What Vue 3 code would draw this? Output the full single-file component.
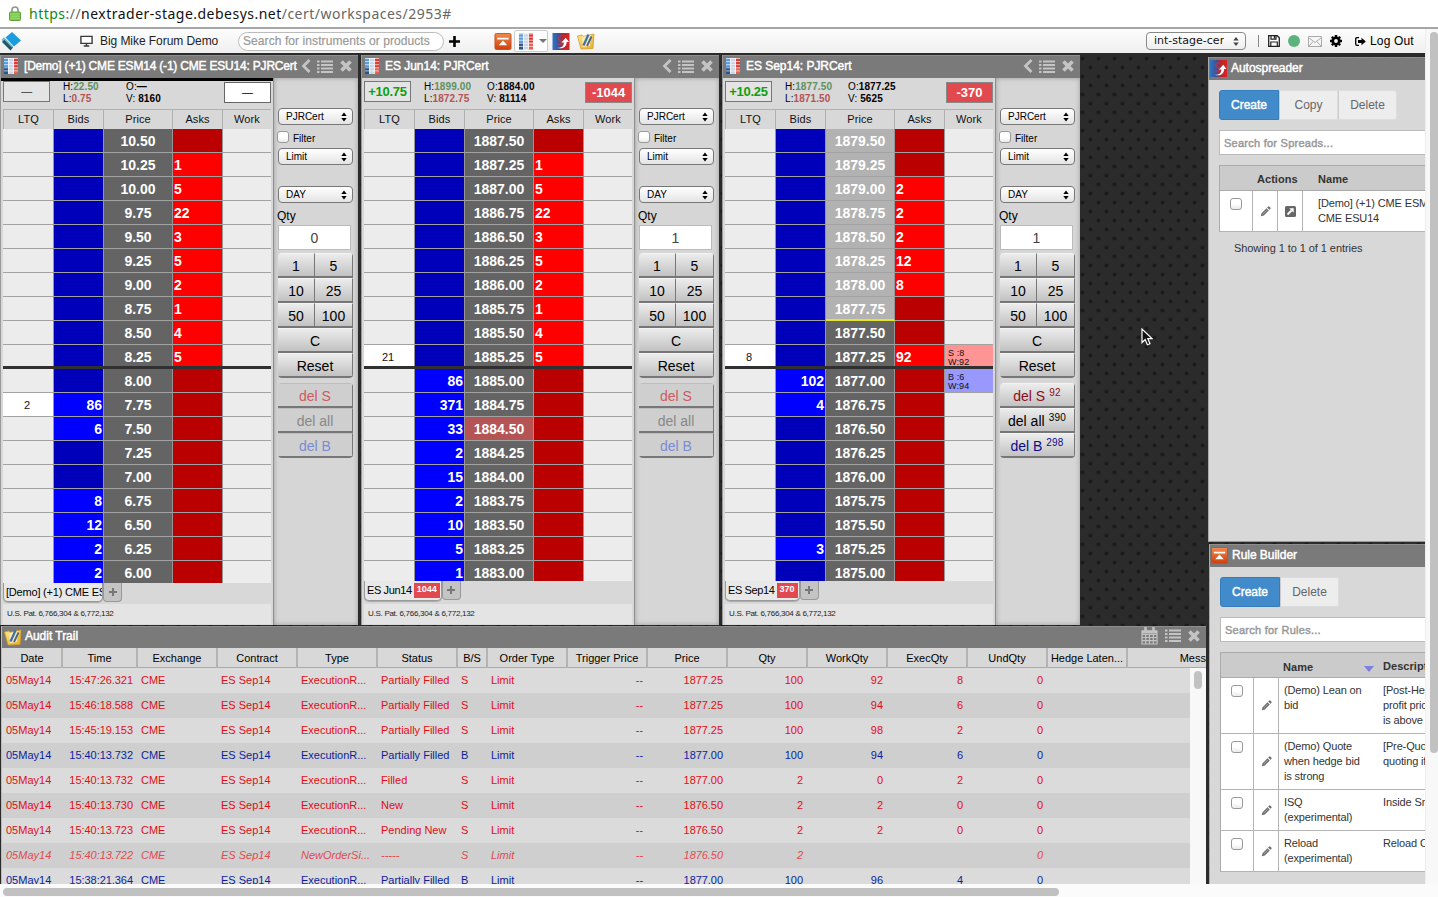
<script setup>
const askSet = ['', '1', '5', '22', '3', '5', '2', '1', '4', '5']

function buildRows(start, bids, asks, extra = {}) {
  return Array.from({ length: 19 }, (_, i) => ({
    price: (start - i * 0.25).toFixed(2),
    bid: bids[i] || '',
    ask: asks[i] || '',
    ...(extra[i] || {}),
  }))
}

const empty10 = Array(10).fill('')

const ladders = [
  {
    id: 'a', title: '[Demo] (+1) CME ESM14 (-1) CME ESU14: PJRCert', change: '—', up: false,
    high: '22.50', low: '0.75', open: '—', volume: '8160', position: '—', loss: false,
    qty: '0', tab: '[Demo] (+1) CME ESM14', badge: '', offset: true, active: false,
    rows: buildRows(10.5, [...empty10, '', '86', '6', '', '', '8', '12', '2', '2'], askSet, { 11: { ltq: '2' } }),
    dels: ['', '', ''],
  },
  {
    id: 'b', title: 'ES Jun14: PJRCert', change: '+10.75', up: true,
    high: '1899.00', low: '1872.75', open: '1884.00', volume: '81114', position: '-1044', loss: true,
    qty: '1', tab: 'ES Jun14', badge: '1044', offset: false, active: false,
    rows: buildRows(1887.5, [...empty10, '86', '371', '33', '2', '15', '2', '10', '5', '1'], askSet, { 9: { ltq: '21' }, 12: { tone: 'last' } }),
    dels: ['', '', ''],
  },
  {
    id: 'c', title: 'ES Sep14: PJRCert', change: '+10.25', up: true,
    high: '1877.50', low: '1871.50', open: '1877.25', volume: '5625', position: '-370', loss: true,
    qty: '1', tab: 'ES Sep14', badge: '370', offset: false, active: true,
    rows: buildRows(1879.5, [...empty10, '102', '4', '', '', '', '', '', '3', ''],
      ['', '', '2', '2', '2', '12', '8', '', '', '92'],
      {
        0: { tone: 'out' }, 1: { tone: 'out' }, 2: { tone: 'out' }, 3: { tone: 'out' },
        4: { tone: 'out' }, 5: { tone: 'out' }, 6: { tone: 'out' }, 7: { tone: 'out edge' },
        9: { ltq: '8', work: ['S :8', 'W:92'], side: 'sell' },
        10: { work: ['B :6', 'W:94'], side: 'buy' },
      }),
    dels: ['92', '390', '298'],
  },
]

const columns = ['Date', 'Time', 'Exchange', 'Contract', 'Type', 'Status', 'B/S', 'Order Type', 'Trigger Price', 'Price', 'Qty', 'WorkQty', 'ExecQty', 'UndQty', 'Hedge Laten...', 'Message']
const rightCols = [1, 8, 9, 10, 11, 12, 13]

const audit = [
  ['15:47:26.321', 'ExecutionR...', 'Partially Filled', 'S', '1877.25', '100', '92', '8'],
  ['15:46:18.588', 'ExecutionR...', 'Partially Filled', 'S', '1877.25', '100', '94', '6'],
  ['15:45:19.153', 'ExecutionR...', 'Partially Filled', 'S', '1877.25', '100', '98', '2'],
  ['15:40:13.732', 'ExecutionR...', 'Partially Filled', 'B', '1877.00', '100', '94', '6'],
  ['15:40:13.732', 'ExecutionR...', 'Filled', 'S', '1877.00', '2', '0', '2'],
  ['15:40:13.730', 'ExecutionR...', 'New', 'S', '1876.50', '2', '2', '0'],
  ['15:40:13.723', 'ExecutionR...', 'Pending New', 'S', '1876.50', '2', '2', '0'],
  ['15:40:13.722', 'NewOrderSi...', '-----', 'S', '1876.50', '2', '', ''],
  ['15:38:21.364', 'ExecutionR...', 'Partially Filled', 'B', '1877.00', '100', '96', '4'],
].map(([time, type, status, side, price, qty, work, exec]) => ({
  side,
  pending: status === '-----',
  cells: ['05May14', time, 'CME', 'ES Sep14', type, status, side, 'Limit', '--', price, qty, work, exec, '0', '', ''],
}))

const rules = [
  { h: 56, name: ['(Demo) Lean on', 'bid'], desc: ['[Post-Hedge]', 'profit price', 'is above'] },
  { h: 56, name: ['(Demo) Quote', 'when hedge bid', 'is strong'], desc: ['[Pre-Quote]', 'quoting if'] },
  { h: 41, name: ['ISQ', '(experimental)'], desc: ['Inside Smart'] },
  { h: 41, name: ['Reload', '(experimental)'], desc: ['Reload Order'] },
]
</script>

<template>
  <div class="page">
    <svg class="defs" aria-hidden="true">
      <defs>
        <linearGradient id="gOrange" x1="0" y1="0" x2="0" y2="1"><stop offset="0" stop-color="#f08a50" /><stop offset="1" stop-color="#cf3f0c" /></linearGradient>
        <linearGradient id="gSpread" x1="0" y1="0" x2="1" y2="0"><stop offset="0" stop-color="#2f76c0" /><stop offset=".4" stop-color="#3a4f96" /><stop offset=".6" stop-color="#b8272d" /><stop offset="1" stop-color="#dc2222" /></linearGradient>
        <linearGradient id="gFolder" x1="0" y1="0" x2="1" y2="1"><stop offset="0" stop-color="#fbe78b" /><stop offset="1" stop-color="#e3ae2c" /></linearGradient>
      </defs>
      <symbol id="i-ladder" viewBox="0 0 14 16">
        <rect width="14" height="16" fill="#c9d6e6" />
        <rect width="4.500" height="9" fill="#5b9bdc" /><rect y="9" width="4.500" height="7" fill="#27558f" />
        <rect x="9.500" width="4.500" height="9" fill="#dc3a35" /><rect x="9.500" y="9" width="4.500" height="7" fill="#e8604c" />
        <path d="M0 .5h14M0 3.600h14M0 6.700h14M0 9.800h14M0 12.900h14" stroke="#fff" stroke-width="1" opacity=".65" />
        <path d="M4.500 0v16M9.500 0v16" stroke="#fff" stroke-width=".8" />
      </symbol>
      <symbol id="i-rule" viewBox="0 0 18 18">
        <rect x=".5" y=".5" width="17" height="17" rx="1.500" fill="url(#gOrange)" stroke="#c9521f" />
        <path d="M3 5h12v2H3zM9 8l4.500 5h-9z" fill="#fff" />
      </symbol>
      <symbol id="i-spread" viewBox="0 0 18 18">
        <rect width="18" height="18" fill="url(#gSpread)" />
        <path d="M10 3C6 3 5 6 8 8s2 5-3 4" fill="none" stroke="#b23a55" stroke-width="2" opacity=".8" />
        <path d="M5 15.500c5 .5 7-2 7-5.500H9.500L14 5l3.500 4.500H15c0 5-4 8-10 6z" fill="#fff" />
      </symbol>
      <symbol id="i-audit" viewBox="0 0 18 18">
        <path d="M.5 4L5 3l1 1.500L17 2l-1 14.500-12 .5z" fill="url(#gFolder)" stroke="#d79b22" stroke-width=".8" />
        <path d="M5 5l9-2-1 11-7 1z" fill="#fdf3bd" opacity=".8" />
        <path d="M6.500 13.500L11.500 2.500" stroke="#3a6fb4" stroke-width="2.200" /><path d="M10 14l4.500-9.500" stroke="#46648f" stroke-width="1.800" />
      </symbol>
      <symbol id="i-chev" viewBox="0 0 10 14"><path d="M8.500 1L2.500 7l6 6" fill="none" stroke="currentColor" stroke-width="2.800" /></symbol>
      <symbol id="i-list" viewBox="0 0 16 13"><path d="M0 1.500h2.500M0 5h2.500M0 8.500h2.500M0 12h2.500M4 1.500h12M4 5h12M4 8.500h12M4 12h12" stroke="currentColor" stroke-width="2" /></symbol>
      <symbol id="i-x" viewBox="0 0 12 12"><path d="M1.500 1.500l9 9M10.500 1.500l-9 9" stroke="currentColor" stroke-width="3.700" /></symbol>
      <symbol id="i-pencil" viewBox="0 0 12 12"><path d="M.8 11.200l.9-3.400 5.400-5.400 2.500 2.500-5.400 5.400zM7.800 1.700L9 .6q.5-.4 1 0l1.400 1.400q.5.500 0 1L10.300 4.200z" fill="#6c6c6c" /><path d="M3 8.900l4.800-4.800" stroke="#ccc" stroke-width=".7" /></symbol>
      <symbol id="i-updown" viewBox="0 0 6 9"><path d="M3 0l2.700 3.600H.3zM3 9l2.700-3.600H.3z" fill="currentColor" /></symbol>
    </svg>

    <header class="url">
      <svg class="lock" viewBox="0 0 12 15"><path d="M3 7V4a3 3 0 016 0v3" fill="none" stroke="#8b9a83" stroke-width="1.600" /><rect x=".5" y="6" width="11" height="8.500" rx="1" fill="#7cc84e" stroke="#5fa43b" /><path d="M1.500 8h9M1.500 10.200h9M1.500 12.400h9" stroke="#a4e07d" stroke-width=".8" /></svg>
      <p class="address"><span class="secure">https</span><span class="dim">://</span>nextrader-stage.debesys.net<span class="dim">/cert/workspaces/2953#</span></p>
    </header>

    <div class="viewport">
      <div class="clip">
        <nav class="toolbar">
          <svg class="logo" viewBox="0 0 20 20"><path d="M11 1l9 8.500-7 6L4.500 6.500z" fill="#1b9ce0" /><path d="M3.500 8L12 16.500 9.500 19.500 1 11z" fill="#285468" /><path d="M1 9.500l2-2 8.500 8.500" fill="none" stroke="#6fb9c8" stroke-width="1.600" /></svg>
          <svg class="monitor" viewBox="0 0 14 12"><path d="M1 1h12v7.500H1z" fill="#fff" stroke="#3a3a3a" stroke-width="1.500" /><path d="M4 11.300h6M7 8.500v3" stroke="#3a3a3a" stroke-width="1.600" /></svg>
          <span class="workspace">Big Mike Forum Demo</span>
          <div class="find">Search for instruments or products</div>
          <svg class="plus" viewBox="0 0 11 11"><path d="M5.500 0v11M0 5.500h11" stroke="#000" stroke-width="2.600" /></svg>
          <svg class="tb-rule"><use href="#i-rule" /></svg>
          <div class="split"><svg class="tb-ladder"><use href="#i-ladder" /></svg><i class="caret"></i></div>
          <svg class="tb-spread"><use href="#i-spread" /></svg>
          <svg class="tb-audit"><use href="#i-audit" /></svg>
          <div class="tools">
            <div class="env"><span>int-stage-cert</span><svg><use href="#i-updown" /></svg></div>
            <i class="bar"></i>
            <svg class="save" viewBox="0 0 12 12"><path d="M.7.700h8.600l2 2v8.600H.7z" fill="#fff" stroke="#222" stroke-width="1.300" /><path d="M3 .7v3.500h5V.7M2.800 11.300V7h6.500v4.300" fill="none" stroke="#222" stroke-width="1.200" /><path d="M6.500 1v2.500" stroke="#222" stroke-width="1.400" /></svg>
            <i class="status"></i>
            <svg class="mail" viewBox="0 0 14 11"><path d="M.5.500h13v10H.5zM.5 1.500L7 6.500l6.500-5M.5 10.500l4.700-5M13.500 10.500l-4.700-5" fill="none" stroke="#aaa" /></svg>
            <svg class="gear" viewBox="0 0 12 12"><circle cx="6" cy="6" r="3.200" fill="none" stroke="#000" stroke-width="2.600" /><path d="M6 0v2M6 10v2M0 6h2M10 6h2M1.800 1.800l1.400 1.400M8.800 8.800l1.400 1.400M10.200 1.800L8.800 3.200M3.200 8.800l-1.400 1.400" stroke="#000" stroke-width="2.400" /></svg>
            <svg class="exit" viewBox="0 0 11 9"><path d="M4 .700H2Q.7.700.7 2v5q0 1.300 1.300 1.300h2" fill="none" stroke="#000" stroke-width="1.300" /><path d="M6.500.800L10.800 4.500 6.500 8.200V6H3V3h3.500z" fill="#000" /></svg>
            <span class="logout">Log Out</span>
          </div>
        </nav>

        <main class="desktop">
          <section v-for="w in ladders" :key="w.id" class="win ladder" :class="'at-' + w.id">
            <div class="title">
              <svg class="t-ladder"><use href="#i-ladder" /></svg>
              <h2 :class="{ tight: w.offset }">{{ w.title }}</h2>
              <div class="ctl"><svg class="c-chev"><use href="#i-chev" /></svg><svg class="c-list"><use href="#i-list" /></svg><svg class="c-x"><use href="#i-x" /></svg></div>
            </div>
            <div class="split-body">
              <div class="main" :class="{ ruled: w.offset }">
                <div class="info">
                  <div class="chg" :class="{ up: w.up }">{{ w.change }}</div>
                  <div class="hl"><p>H:<b class="g">{{ w.high }}</b></p><p>L:<b class="r">{{ w.low }}</b></p></div>
                  <div class="ov"><p>O:<b>{{ w.open }}</b></p><p>V: <b>{{ w.volume }}</b></p></div>
                  <div class="pos" :class="{ loss: w.loss }">{{ w.position }}</div>
                </div>
                <div class="grid head"><span>LTQ</span><span>Bids</span><span>Price</span><span>Asks</span><span>Work</span></div>
                <div class="rows" :class="{ tall: w.offset }">
                  <div v-for="(r, i) in w.rows" :key="i" class="grid row" :class="{ inside: i === 9 }">
                    <span class="ltq" :class="{ hit: r.ltq }">{{ r.ltq }}</span>
                    <span class="bid" :class="{ hit: r.bid }">{{ r.bid }}</span>
                    <span class="price" :class="r.tone">{{ r.price }}</span>
                    <span class="ask" :class="{ hit: r.ask }">{{ r.ask }}</span>
                    <span class="work" :class="r.side"><em v-for="t in r.work" :key="t">{{ t }}</em></span>
                  </div>
                </div>
                <div class="tabs"><span class="tab" :class="{ wide: !w.badge }">{{ w.tab }}<b v-if="w.badge">{{ w.badge }}</b></span><span class="add"><svg viewBox="0 0 8 8"><path d="M4 0v8M0 4h8" stroke="#777" stroke-width="2" /></svg></span></div>
                <div class="pat">U.S. Pat. 6,766,304 &amp; 6,772,132</div>
              </div>
              <aside class="side">
                <div class="sel"><span>PJRCert</span><svg><use href="#i-updown" /></svg></div>
                <label class="filter"><i class="box"></i>Filter</label>
                <div class="sel s2"><span>Limit</span><svg><use href="#i-updown" /></svg></div>
                <div class="sel s3"><span>DAY</span><svg><use href="#i-updown" /></svg></div>
                <p class="qlabel">Qty</p>
                <div class="qty">{{ w.qty }}</div>
                <div class="keys"><i v-for="k in ['1', '5', '10', '25', '50', '100']" :key="k">{{ k }}</i><i class="full">C</i><i class="full">Reset</i></div>
                <div class="keys dels" :class="{ on: w.active }">
                  <i class="full ds">del S<sup v-if="w.dels[0]">{{ w.dels[0] }}</sup></i>
                  <i class="full da">del all<sup v-if="w.dels[1]">{{ w.dels[1] }}</sup></i>
                  <i class="full db">del B<sup v-if="w.dels[2]">{{ w.dels[2] }}</sup></i>
                </div>
              </aside>
            </div>
          </section>

          <section class="win audit">
            <div class="title">
              <svg class="t-audit"><use href="#i-audit" /></svg>
              <h2>Audit Trail</h2>
              <div class="ctl">
                <svg class="c-cal" viewBox="0 0 17 18"><path d="M1 4h15v13H1zM1 7.500h15M1 10.500h15M1 13.700h15M4.700 7v10M8.500 7v10M12.300 7v10" fill="none" stroke="currentColor" stroke-width="1.200" /><path d="M1 3.500h15v3H1z" fill="currentColor" /><path d="M4.500 0v5M12.500 0v5" stroke="currentColor" stroke-width="2.500" /></svg>
                <svg class="c-list"><use href="#i-list" /></svg><svg class="c-x"><use href="#i-x" /></svg>
              </div>
            </div>
            <div class="acols ahead"><span v-for="c in columns" :key="c">{{ c }}</span></div>
            <div class="abody">
              <div class="alist">
                <div v-for="(r, i) in audit" :key="i" class="acols arow" :class="[r.side, { pending: r.pending }]">
                  <span v-for="(c, j) in r.cells" :key="j" :class="{ num: rightCols.includes(j) }">{{ c }}</span>
                </div>
              </div>
              <div class="ascroll"><i></i></div>
            </div>
          </section>

          <section class="win spreader">
            <div class="title"><svg class="t-sq"><use href="#i-spread" /></svg><h2>Autospreader</h2></div>
            <div class="panel">
              <div class="btns"><span class="primary">Create</span><span>Copy</span><span>Delete</span></div>
              <div class="search">Search for Spreads...</div>
              <div class="tbl">
                <div class="th sp"><span></span><span class="act">Actions</span><span>Name</span></div>
                <div class="tr sp">
                  <span class="ck"><i class="box"></i></span>
                  <span class="ic"><svg><use href="#i-pencil" /></svg></span>
                  <span class="ic"><svg viewBox="0 0 11 11"><rect width="11" height="11" rx="1.500" fill="#666" /><path d="M2.500 8.500l4-4" stroke="#fff" stroke-width="1.800" /><path d="M4.300 2.300h4.400v4.400z" fill="#fff" /></svg></span>
                  <span class="nm">[Demo] (+1) CME ESM14 (-1)<br>CME ESU14</span>
                </div>
              </div>
              <p class="count">Showing 1 to 1 of 1 entries</p>
            </div>
          </section>

          <section class="win rules">
            <div class="title"><svg class="t-sq"><use href="#i-rule" /></svg><h2>Rule Builder</h2></div>
            <div class="panel">
              <div class="btns"><span class="primary">Create</span><span>Delete</span></div>
              <div class="search">Search for Rules...</div>
              <div class="tbl">
                <div class="th ru"><span></span><span></span><span class="sorted">Name<i></i></span><span class="dc">Description</span></div>
                <div v-for="r in rules" :key="r.name[0]" class="tr ru" :class="'h' + r.h">
                  <span class="ck"><i class="box"></i></span>
                  <span class="ic"><svg><use href="#i-pencil" /></svg></span>
                  <span class="nm"><em v-for="t in r.name" :key="t">{{ t }}</em></span>
                  <span class="dc"><em v-for="t in r.desc" :key="t">{{ t }}</em></span>
                </div>
              </div>
            </div>
          </section>

          <svg class="cursor" viewBox="0 0 12 18"><path d="M1 1v13.500l3.200-3 2.200 5.300 2.600-1.100-2.200-5.100H11z" fill="#111" stroke="#fff" stroke-width="1.200" /></svg>
        </main>
      </div>
      <div class="vscroll"><i></i></div>
    </div>
    <div class="hscroll"><i></i></div>
  </div>
</template>

<style>
html, body { overflow: hidden; background: #fff; }
</style>

<style scoped>
* { box-sizing: border-box; margin: 0; padding: 0; }
i, em { font-style: normal; }
svg { display: block; flex: none; }
.defs { position: absolute; width: 0; height: 0; }
.page { width: 1438px; height: 897px; display: flex; flex-direction: column; overflow: hidden; font: 11px/1 "Liberation Sans", Arial, sans-serif; color: #000; background: #fff; white-space: nowrap; }

.url { height: 29px; flex: none; display: flex; align-items: center; padding: 0 0 0 9px; border-bottom: 2px solid #a6a6a6; background: #fff; }
.lock { width: 12px; height: 15px; margin-right: 8px; }
.address { font: 14px/20px "Noto Sans", sans-serif; letter-spacing: .48px; color: #111; }
.secure { color: #128a12; }
.dim { color: #666; }

.viewport { height: 855px; flex: none; display: flex; }
.clip { width: 1425px; display: flex; flex-direction: column; overflow: hidden; }
.toolbar { height: 24px; flex: none; display: flex; align-items: center; background: linear-gradient(#fdfdfd, #efefef); }
.logo { width: 20px; height: 20px; margin-left: 1px; }
.monitor { width: 13px; height: 12px; margin-left: 59px; }
.workspace { width: 119px; margin-left: 7px; font-size: 12px; color: #222; letter-spacing: -.06px; }
.find { width: 206px; height: 19px; margin-left: 19px; padding-left: 4px; border: 1px solid #bbb; border-radius: 10px; background: #fff; font-size: 12px; line-height: 17px; color: #999; -webkit-text-stroke: .2px #999; letter-spacing: .08px; }
.plus { width: 11px; height: 11px; margin-left: 5px; }
.tb-rule { width: 18px; height: 17px; margin-left: 34px; }
.split { height: 22px; width: 34px; margin-left: 2px; display: flex; align-items: center; padding-left: 4px; gap: 6px; border: 1px solid #ccc; border-radius: 2px; background: #fff; }
.tb-ladder { width: 14px; height: 17px; }
.caret { border: 4px solid transparent; border-top-color: #777; border-bottom: 0; }
.tb-spread { width: 18px; height: 17px; margin-left: 4px; }
.tb-audit { width: 18px; height: 18px; margin-left: 7px; }
.tools { margin-left: auto; display: flex; align-items: center; padding-right: 11px; }
.env { width: 100px; height: 18px; display: flex; align-items: center; justify-content: space-between; padding: 0 6px 0 7px; border: 1px solid #888; border-radius: 4px; background: linear-gradient(#fff, #eee); }
.env span { width: 70px; overflow: hidden; font: 11px/16px "DejaVu Sans", sans-serif; color: #111; }
.env svg { width: 6px; height: 9px; color: #444; }
.bar { width: 1px; height: 12px; margin: 0 9px 0 12px; background: #888; }
.save { width: 12px; height: 12px; }
.status { width: 12px; height: 12px; margin: 0 8px 0 8px; border-radius: 50%; background: #5cb27c; }
.mail { width: 14px; height: 11px; }
.gear { width: 12px; height: 12px; margin: 0 13px 0 8px; }
.exit { width: 11px; height: 9px; margin-right: 4px; }
.logout { width: 44px; font-size: 12px; letter-spacing: .15px; }

.desktop { position: relative; flex: 1; overflow: hidden; background-color: #2b2b2b; background-image: radial-gradient(circle at 2.500px 14.500px, #1a1a1a 1.200px, transparent 2.600px), radial-gradient(circle at 10.500px 5.500px, #1a1a1a 1.200px, transparent 2.600px); background-size: 16px 18px; }
.win { position: absolute; display: flex; flex-direction: column; background: #d8d8d8; }
.at-a { left: 1px; }
.at-b { left: 362px; }
.at-c { left: 723px; }
.ladder { top: 2px; width: 357px; height: 570px; box-shadow: -1px 0 #999; }
.title { height: 23px; flex: none; display: flex; align-items: center; background: #7a7a7a; border-top: 1px solid #8e8e8e; color: #fff; overflow: hidden; padding-bottom: 2px; }
.title h2 { font-size: 12px; font-weight: 400; line-height: 16px; -webkit-text-stroke: .45px #fff; letter-spacing: -.03px; }
.title h2.tight { letter-spacing: -.2px; }
.t-ladder { width: 14px; height: 16px; margin: 0 6px 0 3px; }
.ctl { margin-left: auto; display: flex; align-items: center; color: #c4c4c4; padding-right: 6px; }
.c-chev { width: 10px; height: 14px; margin-right: 6px; }
.c-list { width: 16px; height: 13px; margin-right: 7px; }
.c-x { width: 12px; height: 12px; }
.split-body { flex: 1; display: flex; min-height: 0; }
.main { width: 272px; display: flex; flex-direction: column; padding-left: 2px; border-top: 0 solid #000; }
.main.ruled { box-shadow: inset 0 3px #000; }
.info { height: 31px; width: 268px; flex: none; display: flex; align-items: flex-start; padding-top: 3px; }
.chg { width: 47px; height: 21px; border: 1px solid #777; background: #e4e4e4; text-align: center; font-size: 13px; font-weight: 700; line-height: 19px; color: #333; letter-spacing: -.3px; }
.ruled .chg, .ruled .pos { font-weight: 400; font-size: 11px; }
.chg.up { color: #0f9f0f; }
.hl, .ov { font-size: 10px; line-height: 12px; letter-spacing: .1px; }
.hl { width: 63px; margin-left: 13px; }
.g { color: #5f8f5f; }
.r { color: #b45454; }
.pos { width: 47px; height: 21px; margin: 1px 0 0 auto; border: 1px solid #666; background: #fff; text-align: center; font-size: 13px; font-weight: 700; line-height: 19px; }
.pos.loss { border-color: #888; background: #e2494f; color: #fff; }
.grid { display: grid; grid-template-columns: 51px 50px 69px 50px 48px; width: 268px; }
.head { height: 20px; flex: none; border-top: 1px solid #b0b0b0; }
.head span { text-align: center; line-height: 19px; border-right: 1px solid #b0b0b0; color: #111; letter-spacing: .1px; }
.head span:first-child { border-left: 1px solid #b0b0b0; }
.head span:last-child { border-right: 0; }
.rows { height: 452px; flex: none; overflow: hidden; }
.rows.tall { height: 454px; }
.row { position: relative; height: 24px; grid-template-rows: 24px; color: #fff; font-size: 14px; font-weight: 700; line-height: 24px; }
.row > span { height: 24px; border-right: 1px solid #969696; border-bottom: 1px solid #a2a2a2; }
.row .ltq { background: #ececec; color: #111; font-size: 11px; font-weight: 400; text-align: center; padding-right: 2px; }
.row .ltq.hit { background: #fff; }
.row .bid { background: #0000ba; text-align: right; padding-right: 1px; }
.row .bid.hit { background: #00f; }
.row .price { background: #646464; text-align: center; }
.row .price.out { background: #b2b2b2; }
.row .price.last { background: #b45454; }
.row .price.edge { border-bottom: 2px solid #e6e622; }
.row .ask { background: #ba0000; padding-left: 1px; }
.row .ask.hit { background: #f00; }
.row .work { background: #ececec; border-right: 0; color: #111; display: flex; flex-direction: column; padding: 4px 0 0 3px; font-size: 9px; font-weight: 400; line-height: 9px; letter-spacing: .1px; }
.row .work.sell { background: #ff9494; }
.row .work.buy { background: #9898fd; }
.row.inside::after { content: ""; position: absolute; left: 0; right: 0; top: 21px; height: 3px; background: #303030; z-index: 1; }
.tabs { flex: 1; display: flex; align-items: flex-start; }
.tab { height: 20px; display: flex; align-items: center; gap: 2px; padding: 0 1px 0 2px; border: 1px solid #999; border-top: 0; border-radius: 0 0 5px 5px; background: #e8e8e8; font-size: 11px; overflow: hidden; letter-spacing: -.38px; box-shadow: 0 1px 1px #aaa; }
.tab.wide { width: 100px; height: 19px; letter-spacing: -.2px; }
.tab b { height: 15px; padding: 0 3px; background: #e2494f; color: #fff; font-size: 9px; line-height: 12px; letter-spacing: 0; }
.add { width: 19px; height: 19px; display: flex; align-items: center; justify-content: center; border: 1px solid #999; border-top: 0; border-radius: 0 0 4px 4px; background: #c4c4c4; }
.add svg { width: 8px; height: 8px; }
.pat { height: 20px; width: 268px; flex: none; margin-bottom: 1px; padding-left: 4px; background: #e4e4e4; font-size: 8px; line-height: 19px; color: #222; letter-spacing: -.28px; }
.side { flex: 1; display: flex; flex-direction: column; padding: 30px 5px 0 4px; border-left: 1px solid #8f8f8f; background: #d6d6d6; box-shadow: inset 0 0 5px #999; }
.sel { height: 17px; flex: none; display: flex; align-items: center; border: 1px solid #777; border-radius: 4px; background: linear-gradient(#fff, #e4e4e4); font-size: 10px; color: #000; padding: 0 5px 0 7px; }
.sel span { flex: 1; }
.sel svg { width: 6px; height: 10px; }
.filter { display: flex; align-items: center; gap: 4px; height: 23px; font-size: 10px; padding-top: 4px; }
.box { display: block; width: 12px; height: 12px; border: 1px solid #999; border-radius: 3px; background: linear-gradient(#fff 50%, #eaeaea); }
.filter .box { margin: -4px 0 0 -1px; }
.s3 { margin-top: 21px; }
.qlabel { margin-top: 7px; margin-left: -1px; font-size: 12px; line-height: 12px; height: 15px; }
.qty { width: 73px; height: 25px; flex: none; border: 1px solid #bbb; background: #fff; text-align: center; font-size: 14px; line-height: 25px; color: #444; }
.keys { display: grid; grid-template-columns: 37px 38px; grid-auto-rows: 25px; margin-top: 3px; width: 75px; border-radius: 4px; overflow: hidden; flex: none; }
.keys i { text-align: center; font-size: 14px; line-height: 24px; border-bottom: 2px solid #777; border-right: 1px solid #777; border-top: 1px solid #f4f4f4; background: linear-gradient(#ececec, #c2c2c2); }
.keys .full { grid-column: 1 / 3; }
.keys.dels { margin-top: 5px; }
.dels i { background: #cfcfcf; border-top-color: #bdbdbd; }
.dels .ds { color: #cf5a5f; }
.dels .da { color: #888; }
.dels .db { color: #7a8cd2; }
.dels.on i { background: linear-gradient(#ececec, #c2c2c2); border-top-color: #f4f4f4; }
.dels.on .ds { color: #8e0c18; }
.dels.on .da { color: #000; }
.dels.on .db { color: #0c0c8e; }
.dels sup { font-size: 10px; line-height: 0; vertical-align: 5px; margin-left: 4px; letter-spacing: .2px; }

.audit { left: 1px; top: 573px; width: 1205px; height: 260px; border-left: 1px solid #bbb; overflow: hidden; }
.audit .title { height: 22px; padding-bottom: 4px; overflow: visible; }
.audit .ctl { padding-right: 6px; }
.t-audit { width: 18px; height: 18px; margin: 2px 3px 0 2px; }
.c-cal { width: 17px; height: 18px; margin-right: 7px; }
.acols { display: grid; grid-template-columns: 60px 75px 80px 80px 80px 80px 30px 80px 80px 80px 80px 80px 80px 80px 80px 150px; width: 1275px; }
.ahead { height: 20px; flex: none; border-bottom: 1px solid #aaa; margin-left: 1px; }
.ahead span { text-align: center; line-height: 20px; border-right: 2px solid #b4b4b4; }
.abody { display: flex; flex: 1; min-height: 0; }
.alist { width: 1188px; overflow: hidden; }
.arow { height: 25px; background: #dbdbdb; color: #e00d17; line-height: 25px; }
.arow:nth-child(even) { background: #cfcfcf; }
.arow.B { color: #0b1f9e; }
.arow.pending { font-style: italic; color: #e04a50; }
.arow span { padding: 0 4px; overflow: hidden; }
.arow .num { text-align: right; letter-spacing: -.05px; }
.ascroll { flex: 1; background: #f8f8f8; padding: 3px 0 0 4px; }
.ascroll i { display: block; width: 8px; height: 18px; border-radius: 4px; background: #c2c2c2; }

.spreader { left: 1208px; top: 4px; width: 240px; height: 485px; border-left: 1px solid #aaa; border-bottom: 1px solid #999; }
.spreader .panel { padding-left: 10px; }
.rules { left: 1209px; top: 491px; width: 240px; height: 350px; border-left: 1px solid #aaa; }
.rules .panel { padding-left: 10px; }
.t-sq { width: 17px; height: 17px; margin: 1px 4px 0 1px; }
.panel { padding: 10px 0 0 9px; }
.btns { display: flex; font-size: 12px; line-height: 29px; }
.btns span { width: 59px; height: 30px; text-align: center; background: #ededed; color: #666; border: 1px solid #ddd; border-left-color: #ccc; }
.btns span:last-child { border-radius: 0 3px 3px 0; }
.btns .primary { width: 60px; border-color: #357ebd; border-radius: 3px 0 0 3px; background: #428bca; color: #fff; font-weight: 400; -webkit-text-stroke: .45px #fff; }
.search { height: 25px; margin-top: 10px; padding-left: 4px; border: 1px solid #bbb; background: #fff; color: #999; line-height: 25px; letter-spacing: .25px; -webkit-text-stroke: .45px #999; }
.tbl { margin-top: 10px; width: 300px; border: 1px solid #aaa; border-bottom: 0; background: #fff; color: #333; }
.th { background: #cbcbcb; font-weight: 700; border-bottom: 1px solid #aaa; line-height: 27px; height: 25px; letter-spacing: .05px; }
.tr { border-bottom: 1px solid #b4b4b4; line-height: 15px; letter-spacing: -.14px; }
.th, .tr { display: grid; }
.sp { grid-template-columns: 33px 25px 25px 1fr; }
.th.sp { grid-template-columns: 33px 65px 1fr; }
.th .act { padding-left: 4px; }
.tr.sp { height: 41px; }
.ru { grid-template-columns: 33px 25px 99px 1fr; }
.h56 { height: 56px; }
.h41 { height: 41px; }
.ck { padding: 7px 0 0 10px; border-right: 1px solid #b4b4b4; }
.ic { display: flex; align-items: center; justify-content: center; border-right: 1px solid #b4b4b4; }
.ic svg { width: 11px; height: 11px; }
.nm { padding: 5px 0 0 15px; }
.ru .nm { padding: 5px 0 0 5px; }
.nm em, .dc em { display: block; }
.ru .dc { padding: 5px 0 0 5px; }
.th.ru .dc { padding-top: 0; }
.th .sorted { display: flex; justify-content: space-between; align-items: center; padding: 0 5px 0 4px; line-height: 26px; }
.sorted i { border: 5px solid transparent; border-top: 6px solid #7b80de; border-bottom: 0; margin: 4px -1px 0 0; }
.count { margin: 11px 0 0 15px; color: #333; letter-spacing: -.07px; }

.cursor { position: absolute; left: 1141px; top: 275px; width: 12px; height: 18px; }
.vscroll { width: 13px; background: #f8f8f8; padding: 3px 1px 0 4px; border-left: 1px solid #eee; }
.vscroll i { display: block; width: 8px; height: 721px; border-radius: 4px; background: #c1c1c1; }
.hscroll { height: 13px; background: #fbfbfb; padding: 4px 0 0 3px; }
.hscroll i { display: block; width: 1056px; height: 8px; border-radius: 4px; background: #c1c1c1; }
</style>
